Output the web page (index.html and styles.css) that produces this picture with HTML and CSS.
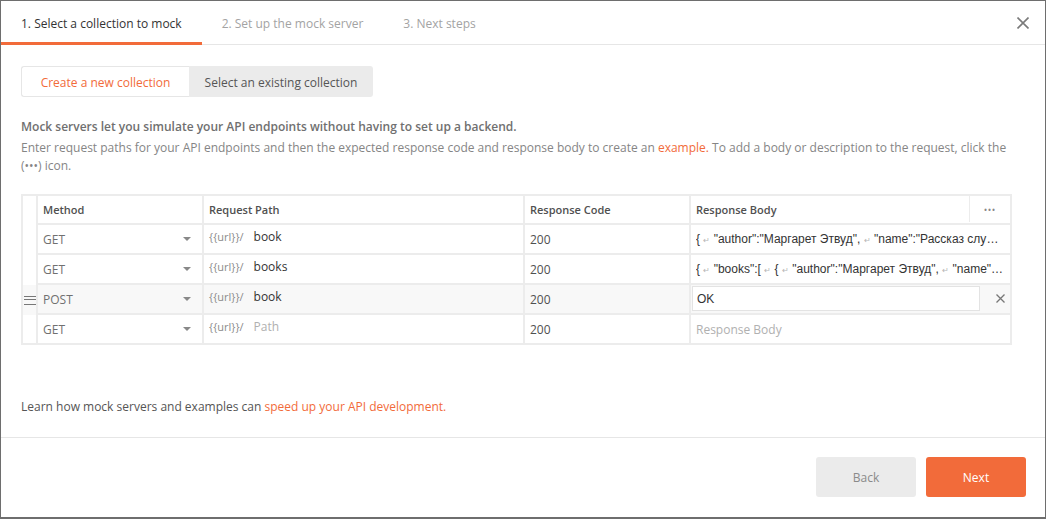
FILE: index.html
```html
<!DOCTYPE html>
<html lang="en">
<head>
<meta charset="utf-8">
<title>Create mock server</title>
<link rel="stylesheet" href="styles.css">
</head>
<body>
<div class="modal">
  <div class="tabs">
    <div class="tab tab-active">1. Select a collection to mock</div>
    <div class="tab">2. Set up the mock server</div>
    <div class="tab">3. Next steps</div>
    <div class="tabs-spacer"></div>
    <button class="close" aria-label="Close">
      <svg width="12" height="12" viewBox="0 0 12 12"><path d="M0.5 0.5 L11.5 11.5 M11.5 0.5 L0.5 11.5" stroke="#7a7a7a" stroke-width="1.6" fill="none"/></svg>
    </button>
  </div>

  <div class="body">
    <div class="segmented">
      <div class="seg seg-active">Create a new collection</div>
      <div class="seg">Select an existing collection</div>
    </div>

    <p class="lead">Mock servers let you simulate your API endpoints without having to set up a backend.</p>
    <p class="desc">Enter request paths for your API endpoints and then the expected response code and response body to create an <span class="link">example.</span> To add a body or description to the request, click the (•••) icon.</p>

    <div class="table">
      <div class="row row-head">
        <div class="handle"></div>
        <div class="cell c-method">Method</div>
        <div class="cell c-path">Request Path</div>
        <div class="cell c-code">Response Code</div>
        <div class="cell c-body c-body-head"><span class="hb">Response Body</span><span class="more">•••</span></div>
      </div>
      <div class="row">
        <div class="handle"></div>
        <div class="cell c-method"><span>GET</span><span class="caret"></span></div>
        <div class="cell c-path"><span class="url">{{url}}/</span><span class="pv">book</span></div>
        <div class="cell c-code">200</div>
        <div class="cell c-body"><span class="json">{ <span class="nl">↵</span> "author":"Маргарет Этвуд", <span class="nl">↵</span> "name":"Рассказ служанки" <span class="nl">↵</span> }</span></div>
      </div>
      <div class="row">
        <div class="handle"></div>
        <div class="cell c-method"><span>GET</span><span class="caret"></span></div>
        <div class="cell c-path"><span class="url">{{url}}/</span><span class="pv">books</span></div>
        <div class="cell c-code">200</div>
        <div class="cell c-body"><span class="json">{ <span class="nl">↵</span> "books":[ <span class="nl">↵</span> { <span class="nl">↵</span> "author":"Маргарет Этвуд", <span class="nl">↵</span> "name":"Рассказ служанки" }</span></div>
      </div>
      <div class="row row-hover">
        <div class="handle"><span class="grip"></span></div>
        <div class="cell c-method"><span>POST</span><span class="caret"></span></div>
        <div class="cell c-path"><span class="url">{{url}}/</span><span class="pv">book</span></div>
        <div class="cell c-code">200</div>
        <div class="cell c-body c-body-edit">
          <div class="body-input">OK</div>
          <svg class="del" width="9" height="9" viewBox="0 0 9 9"><path d="M0.5 0.5 L8.5 8.5 M8.5 0.5 L0.5 8.5" stroke="#777" stroke-width="1.3" fill="none"/></svg>
        </div>
      </div>
      <div class="row row-last">
        <div class="handle"></div>
        <div class="cell c-method"><span>GET</span><span class="caret"></span></div>
        <div class="cell c-path"><span class="url">{{url}}/</span><span class="pv ph">Path</span></div>
        <div class="cell c-code">200</div>
        <div class="cell c-body"><span class="ph">Response Body</span></div>
      </div>
    </div>

    <p class="learn">Learn how mock servers and examples can <span class="link">speed up your API development.</span></p>
  </div>

  <div class="footer">
    <button class="btn btn-back">Back</button>
    <button class="btn btn-next">Next</button>
  </div>
</div>
</body>
</html>
```

FILE: styles.css
```css
* { box-sizing: border-box; }

html, body {
  margin: 0;
  height: 100%;
}

body {
  background: #6e6e6e;
  padding: 1px 1px 2px 1px;
  font-family: "Open Sans", "Liberation Sans", sans-serif;
  font-size: 12px;
  color: #505050;
}

.modal {
  background: #fff;
  height: 516px;
  display: flex;
  flex-direction: column;
}

/* Tabs */
.tabs {
  display: flex;
  align-items: stretch;
  height: 44px;
  border-bottom: 1px solid #e6e6e6;
}

.tab {
  display: flex;
  align-items: center;
  padding: 2px 20px 0 20px;
  color: #a3a3a3;
  font-size: 12px;
  white-space: nowrap;
}

.tab-active {
  color: #333;
  border-bottom: 3px solid #f26b3a;
  margin-bottom: -1px;
  padding-top: 4px;
}

.tabs-spacer { flex: 1; }

.close {
  border: 0;
  background: none;
  padding: 1px 0 0 0;
  width: 40px;
  margin-right: 2px;
  display: flex;
  align-items: center;
  justify-content: center;
  cursor: pointer;
}

/* Body */
.body {
  flex: 1;
  display: flex;
  flex-direction: column;
  padding: 21px 20px 20px 20px;
}

.segmented {
  display: flex;
  height: 31px;
  align-self: flex-start;
}

.seg {
  display: flex;
  align-items: center;
  justify-content: center;
  height: 31px;
  width: 184px;
  padding-top: 1px;
  background: #ebebeb;
  color: #555;
  border-radius: 0 3px 3px 0;
}

.seg-active {
  width: 168px;
  background: #fff;
  color: #f26b3a;
  border: 1px solid #e6e6e6;
  border-right: 0;
  border-radius: 3px 0 0 3px;
}

.lead {
  margin: 21px 0 0 0;
  line-height: 18px;
  font-weight: 600;
  color: #707070;
}

.desc {
  margin: 3px 0 0 0;
  line-height: 18px;
  color: #858585;
}

.link { color: #f26b3a; }

/* Table */
.table {
  margin-top: 19px;
  width: 991px;
  border: 2px solid #ececec;
}

.row {
  display: flex;
  height: 30px;
}

.row-head { height: 29px; }
.row-last { height: 28px; }

.handle {
  width: 13px;
  flex: none;
  display: flex;
  align-items: center;
  justify-content: center;
}

.cell {
  flex: none;
  display: flex;
  align-items: center;
  border-left: 2px solid #ececec;
  border-bottom: 2px solid #ececec;
  padding: 0 5px;
  color: #505050;
  white-space: nowrap;
  overflow: hidden;
}

.row-last .cell { border-bottom: 0; }

.row-head .cell {
  font-size: 11px;
  font-weight: 600;
  color: #505050;
  padding-bottom: 1px;
}

.c-method { width: 166px; justify-content: space-between; color: #707070; }
.c-path { width: 321px; padding-bottom: 5px; }
.c-code { width: 166px; }
.c-body { width: 321px; }

.row-head .c-method { color: #505050; }

.caret {
  width: 0;
  height: 0;
  border-left: 4px solid transparent;
  border-right: 4px solid transparent;
  border-top: 4px solid #888;
  margin-right: 6px;
}

.url {
  color: #8c8c8c;
  font-size: 11px;
  margin-right: 10px;
}

.pv { color: #333; }
.ph { color: #b0b0b0; }

.c-body-head {
  padding-right: 0;
  justify-content: space-between;
}

.more {
  width: 41px;
  align-self: stretch;
  display: flex;
  align-items: center;
  justify-content: center;
  border-left: 1px solid #ececec;
  color: #888;
  font-size: 8px;
  letter-spacing: 1px;
}

.json {
  font-family: "Liberation Sans", Arial, sans-serif;
  font-size: 12px;
  color: #333;
  overflow: hidden;
  text-overflow: ellipsis;
  white-space: nowrap;
  display: block;
  width: 100%;
}

.nl {
  color: #b5b5b5;
  font-size: 8px;
}

.row-hover { background: #f8f8f8; }

.grip {
  width: 12px;
  height: 9px;
  border-top: 1.5px solid #777;
  border-bottom: 1.5px solid #777;
  position: relative;
}

.grip::after {
  content: "";
  position: absolute;
  left: 0;
  right: 0;
  top: 2.5px;
  height: 0;
  border-top: 1.5px solid #777;
}

.c-body-edit {
  padding: 1px 0 2px 1px;
  align-items: stretch;
}

.body-input {
  width: 288px;
  background: #fff;
  border: 1px solid #e3e3e3;
  display: flex;
  align-items: center;
  padding-left: 4px;
  font-family: "Liberation Sans", Arial, sans-serif;
  color: #333;
}

.del {
  align-self: center;
  margin-left: 16px;
}

.learn {
  margin: auto 0 0 0;
  line-height: 18px;
  color: #555;
  padding-bottom: 1px;
}

/* Footer */
.footer {
  border-top: 1px solid #e6e6e6;
  padding: 19px 19px 20px 20px;
  display: flex;
  justify-content: flex-end;
  gap: 10px;
}

.btn {
  width: 100px;
  height: 40px;
  border: 0;
  border-radius: 3px;
  font-family: "Open Sans", "Liberation Sans", sans-serif;
  font-size: 12px;
  cursor: pointer;
}

.btn-back {
  background: #ebebeb;
  color: #8a8a8a;
}

.btn-next {
  background: #f26b3a;
  color: #fff;
}
```
